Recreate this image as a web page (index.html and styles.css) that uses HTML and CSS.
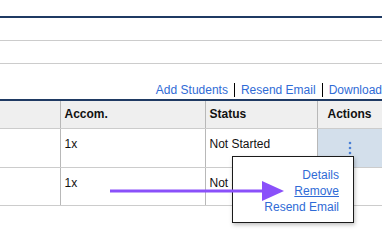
FILE: index.html
```html
<!DOCTYPE html>
<html lang="en">
<head>
  <meta charset="UTF-8" />
  <meta name="viewport" content="width=device-width, initial-scale=1.0" />
  <title>Roster</title>
  <link rel="stylesheet" href="styles.css">
</head>
<body>
  <div class="page">
    <div class="topbar"></div>
    <div class="band"></div>
    <div class="band"></div>

    <div class="toolbar">
      <a href="#">Add Students</a>
      <a href="#">Resend Email</a>
      <a href="#">Download</a>
    </div>

    <table class="roster">
      <colgroup>
        <col class="c-name">
        <col class="c-accom">
        <col class="c-status">
        <col class="c-actions">
      </colgroup>
      <thead>
        <tr>
          <th class="first"></th>
          <th>Accom.</th>
          <th>Status</th>
          <th>Actions</th>
        </tr>
      </thead>
      <tbody>
        <tr>
          <td class="first"></td>
          <td>1x</td>
          <td>Not Started</td>
          <td class="act open">
            <svg class="dots" width="4" height="14" viewBox="0 0 4 14">
              <circle cx="2" cy="2" r="1.3" />
              <circle cx="2" cy="7" r="1.3" />
              <circle cx="2" cy="12" r="1.3" />
            </svg>
          </td>
        </tr>
        <tr>
          <td class="first"></td>
          <td>1x</td>
          <td>Not Started</td>
          <td class="act"></td>
        </tr>
      </tbody>
    </table>

    <div class="menu">
      <a href="#">Details</a>
      <a href="#" class="hover">Remove</a>
      <a href="#">Resend Email</a>
    </div>

    <svg class="arrow" width="180" height="26" viewBox="0 0 180 26">
      <line x1="2" y1="13" x2="158" y2="13" />
      <polygon points="154,3 176,13 154,23" />
    </svg>
  </div>
</body>
</html>
```

FILE: styles.css
```css
:root {
  --navy: #1f3a63;
  --link: #2f6bd6;
  --rule: #cccccc;
  --head: #efefef;
  --picked: #d3dfeb;
  --purple: #8a50fa;
  --font: 'Liberation Sans', Arial, sans-serif;
}

* {
  box-sizing: border-box;
  margin: 0;
  padding: 0;
}

body {
  font-family: var(--font);
  font-size: 12px;
  color: #111;
  background: #fff;
  overflow: hidden;
}

.page {
  position: relative;
  width: 382px;
  height: 246px;
}

.topbar {
  height: 18px;
  border-bottom: 2px solid var(--navy);
}

.band {
  height: 23px;
  border-bottom: 1px solid var(--rule);
}

.toolbar {
  height: 35px;
  display: flex;
  justify-content: flex-end;
  align-items: flex-end;
  padding-bottom: 2px;
  line-height: 14px;
  white-space: nowrap;
}

.toolbar a {
  color: var(--link);
  text-decoration: none;
  padding: 0 6px;
  border-left: 1px solid #000;
}

.toolbar a:first-child {
  border-left: none;
}

.toolbar a:last-child {
  padding-right: 0;
}

.roster {
  width: 382px;
  table-layout: fixed;
  border-collapse: collapse;
  border-top: 2px solid var(--navy);
}

.c-name { width: 60px; }
.c-accom { width: 145px; }
.c-status { width: 112px; }
.c-actions { width: 65px; }

.roster th {
  height: 28px;
  background: var(--head);
  text-align: left;
  font-weight: bold;
  padding: 0 4px;
  border-left: 1px solid #b8b8b8;
  border-bottom: 1px solid var(--rule);
}

.roster th:last-child {
  padding-left: 10px;
}

.roster td {
  height: 39px;
  vertical-align: top;
  padding: 8px 4px 0;
  border-left: 1px solid #b8b8b8;
  border-bottom: 1px solid var(--rule);
}

.roster tbody tr:last-child td {
  height: 38px;
}

.roster .first {
  border-left: none;
}

.roster td.act {
  text-align: center;
  padding: 12px 0 0;
}

.roster td.open {
  background: var(--picked);
}

.dots {
  display: inline-block;
  fill: #4a80d6;
}

.menu {
  position: absolute;
  left: 232px;
  top: 156px;
  width: 122px;
  height: 67px;
  background: #fff;
  border: 1px solid #1a1a1a;
  box-shadow: 1px 2px 4px rgba(0, 0, 0, 0.25);
  display: flex;
  flex-direction: column;
  align-items: flex-end;
  padding: 10px 14px 0 0;
  line-height: 16px;
}

.menu a {
  color: var(--link);
  text-decoration: none;
}

.menu a.hover {
  text-decoration: underline;
}

.arrow {
  position: absolute;
  left: 108px;
  top: 178px;
}

.arrow line {
  stroke: var(--purple);
  stroke-width: 3;
}

.arrow polygon {
  fill: var(--purple);
}
```
